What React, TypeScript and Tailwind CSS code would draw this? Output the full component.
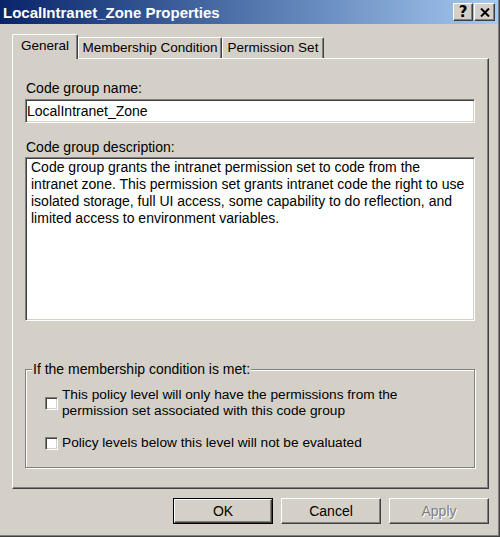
import React from "react";

const sunken =
  "border border-t-[#808080] border-l-[#808080] border-r-white border-b-white shadow-[inset_1px_1px_0_#404040,inset_-1px_-1px_0_#d4d0c8]";
const raised =
  "border border-t-white border-l-white border-r-[#404040] border-b-[#404040] shadow-[inset_-1px_-1px_0_#808080]";

function Checkbox() {
  return <div className={`w-[13px] h-[13px] bg-white shrink-0 ${sunken}`} />;
}

export default function App() {
  return (
    <div className="w-[500px] h-[537px] bg-[#d4d0c8] border-r border-b border-r-[#404040] border-b-[#404040] text-[14px] text-black font-['Liberation_Sans',Arial,sans-serif] overflow-hidden">
      <div className="h-full border-r border-b border-r-[#808080] border-b-[#808080] flex flex-col">
        {/* Title bar */}
        <div className="h-[24px] bg-linear-to-r from-[#0a246a] to-[#a6caf0] flex items-center justify-between pl-[3px] pr-[3px]">
          <span className="text-white font-bold text-[15px] leading-none">
            LocalIntranet_Zone Properties
          </span>
          <div className="flex gap-[1px] items-center">
            <div className={`w-[20px] h-[18px] bg-[#d4d0c8] flex items-center justify-center ${raised}`}>
              <span className="font-bold text-[15px] leading-none font-['DejaVu_Sans',sans-serif]">?</span>
            </div>
            <div className={`w-[21px] h-[18px] bg-[#d4d0c8] flex items-center justify-center ${raised}`}>
              <svg width="10" height="9" viewBox="0 0 10 9">
                <path d="M1 0.5 L9 8.5 M9 0.5 L1 8.5" stroke="black" strokeWidth="2" />
              </svg>
            </div>
          </div>
        </div>

        {/* Tabs */}
        <div className="ml-[12px] mt-[10px] flex items-end h-[24px] text-[13.5px]">
          <div className="relative z-10 w-[66px] h-[25px] -mb-[1px] bg-[#d4d0c8] border-t border-l border-r border-t-white border-l-white border-r-[#404040] shadow-[inset_-1px_0_0_#808080] rounded-tl-[2px] rounded-tr-[2px] flex justify-center pt-[3px]">
            <span className="leading-[16px]">General</span>
          </div>
          <div className="w-[144px] h-[21px] border-t border-l border-r border-t-white border-l-white border-r-[#404040] shadow-[inset_-1px_0_0_#808080] rounded-tl-[2px] rounded-tr-[2px] flex justify-center pt-[2px]">
            <span className="leading-[16px]">Membership Condition</span>
          </div>
          <div className="w-[102px] h-[21px] border-t border-l border-r border-t-white border-l-white border-r-[#404040] shadow-[inset_-1px_0_0_#808080] rounded-tl-[2px] rounded-tr-[2px] flex justify-center pt-[2px]">
            <span className="leading-[16px]">Permission Set</span>
          </div>
        </div>

        {/* Panel */}
        <div className={`ml-[12px] w-[477px] h-[431px] ${raised} pl-[12px] pt-[21px] flex flex-col`}>
          <div className="leading-[16px] pl-[1px]">Code group name:</div>
          <div className={`mt-[3px] w-[450px] h-[24px] bg-white ${sunken} flex items-center pl-[1px] leading-[16px]`}>
            LocalIntranet_Zone
          </div>
          <div className="mt-[16px] leading-[16px] pl-[1px]">Code group description:</div>
          <div className={`mt-[2px] w-[450px] h-[164px] bg-white ${sunken} pl-[5px] pt-[1px] leading-[17px]`}>
            <div>Code group grants the intranet permission set to code from the</div>
            <div>intranet zone. This permission set grants intranet code the right to use</div>
            <div>isolated storage, full UI access, some capability to do reflection, and</div>
            <div>limited access to environment variables.</div>
          </div>

          <fieldset className="mt-[40px] w-[450px] h-[107px] border border-[#808080] shadow-[inset_1px_1px_0_white,1px_1px_0_white]">
            <legend className="ml-[6px] px-[1px] leading-[16px] bg-[#d4d0c8]">
              If the membership condition is met:
            </legend>
            <div className="pl-[19px] pt-[10px] text-[13.7px]">
              <div className="flex items-center gap-[4px]">
                <Checkbox />
                <div className="leading-[16px]">
                  <div>This policy level will only have the permissions from the</div>
                  <div>permission set associated with this code group</div>
                </div>
              </div>
              <div className="flex items-center gap-[4px] mt-[16px]">
                <Checkbox />
                <div className="leading-[16px]">Policy levels below this level will not be evaluated</div>
              </div>
            </div>
          </fieldset>
        </div>

        {/* Buttons */}
        <div className="ml-[173px] mt-[9px] flex gap-[8px]">
          <div className="w-[100px] h-[26px] border border-black">
            <div className={`w-full h-full ${raised} flex items-center justify-center`}>OK</div>
          </div>
          <div className={`w-[100px] h-[26px] ${raised} flex items-center justify-center`}>Cancel</div>
          <div className={`w-[100px] h-[26px] ${raised} flex items-center justify-center text-[#808080] [text-shadow:1px_1px_0_white]`}>
            Apply
          </div>
        </div>
      </div>
    </div>
  );
}
